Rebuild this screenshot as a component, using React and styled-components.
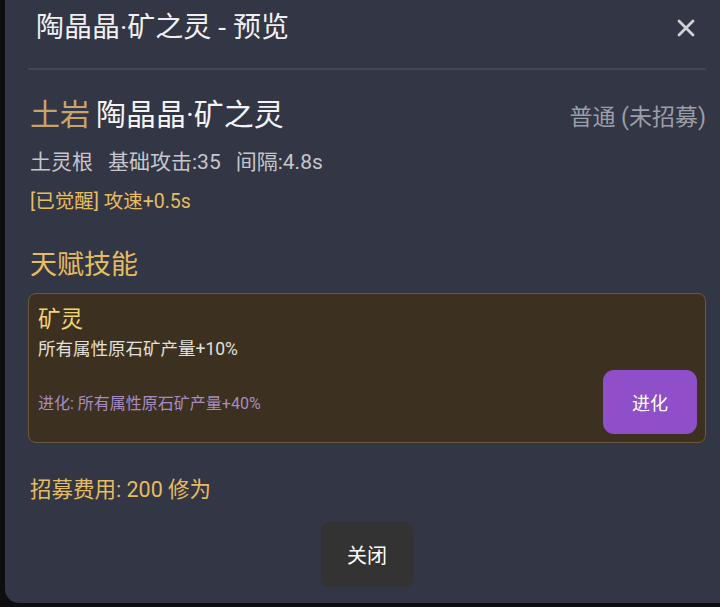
import React from 'react'
import styled, { createGlobalStyle } from 'styled-components'

const GlobalStyle = createGlobalStyle`
    html, body {
        margin: 0;
        padding: 0;
        background: #0e0e11;
        font-family: Roboto, "Noto Sans CJK SC", sans-serif;
    }
`

const Modal = styled.div`
    box-sizing: border-box;
    margin-left: 5px;
    width: 715px;
    height: 603px;
    padding: 0 14px 0 23px;
    background: #323645;
    border-radius: 0 0 0 14px;
    display: flex;
    flex-direction: column;
`

const Header = styled.div`
    display: flex;
    justify-content: space-between;
    align-items: center;
    height: 56px;
    padding: 0 10px 12px 8px;
    border-bottom: 2px solid #414555;
`

const Title = styled.h2`
    margin: 0;
    font-size: 28px;
    line-height: 36px;
    font-weight: 400;
    color: #f0f0f2;
`

const CloseIcon = styled.button`
    border: none;
    background: none;
    padding: 0;
    width: 20px;
    height: 20px;
    display: flex;
    cursor: pointer;
`

const NameRow = styled.div`
    display: flex;
    justify-content: space-between;
    align-items: center;
    margin-top: 25px;
    padding: 0 0 0 2px;
`

const Name = styled.div`
    font-size: 30px;
    line-height: 40px;
    color: #f4f4f6;
`

const Element = styled.span`
    color: #c9a46a;
    margin-right: 6px;
`

const Rarity = styled.div`
    font-size: 23px;
    color: #9c9ea7;
`

const Stats = styled.div`
    display: flex;
    gap: 15px;
    margin-top: 14px;
    padding-left: 2px;
    font-size: 21px;
    line-height: 26px;
    color: #c6c7cc;
`

const Awakened = styled.div`
    margin-top: 15px;
    padding-left: 2px;
    font-size: 19.5px;
    line-height: 24px;
    color: #e6bd5e;
`

const SectionTitle = styled.h3`
    margin: 35px 0 0;
    padding-left: 2px;
    font-size: 27px;
    line-height: 32px;
    font-weight: 400;
    color: #e6bd5e;
`

const SkillCard = styled.div`
    margin-top: 12px;
    height: 150px;
    box-sizing: border-box;
    padding: 11px 8px 8px 9px;
    background: #3c3020;
    border: 1px solid #6a583a;
    border-radius: 8px;
    display: flex;
    flex-direction: column;
`

const SkillName = styled.div`
    font-size: 22.5px;
    line-height: 28px;
    color: #f3d374;
`

const SkillDesc = styled.div`
    margin-top: 5px;
    font-size: 17.5px;
    line-height: 22px;
    color: #e2e0dc;
`

const EvolveRow = styled.div`
    margin-top: auto;
    display: flex;
    justify-content: space-between;
    align-items: center;
`

const EvolveText = styled.div`
    font-size: 16px;
    color: #a98bc2;
`

const Button = styled.button`
    border: none;
    font-family: inherit;
    font-size: ${p => p.$fs}px;
    color: #ffffff;
    width: ${p => p.$w}px;
    height: ${p => p.$h}px;
    border-radius: ${p => p.$r}px;
    background: ${p => p.$bg};
    cursor: pointer;
`

const Cost = styled.div`
    margin-top: 34px;
    padding-left: 2px;
    font-size: 21.5px;
    line-height: 26px;
    color: #e6bd5e;
`

const Footer = styled.div`
    display: flex;
    justify-content: center;
    margin-top: 19px;
`

export default function App() {
    return (
        <>
            <GlobalStyle />
            <Modal>
                <Header>
                    <Title>陶晶晶·矿之灵 - 预览</Title>
                    <CloseIcon aria-label="关闭">
                        <svg width="20" height="20" viewBox="0 0 20 20">
                            <path d="M3 3L17 17M17 3L3 17" stroke="#d2d3d8" strokeWidth="2.8" strokeLinecap="round" />
                        </svg>
                    </CloseIcon>
                </Header>
                <NameRow>
                    <Name><Element>土岩</Element>陶晶晶·矿之灵</Name>
                    <Rarity>普通 (未招募)</Rarity>
                </NameRow>
                <Stats>
                    <span>土灵根</span>
                    <span>基础攻击:35</span>
                    <span>间隔:4.8s</span>
                </Stats>
                <Awakened>[已觉醒] 攻速+0.5s</Awakened>
                <SectionTitle>天赋技能</SectionTitle>
                <SkillCard>
                    <SkillName>矿灵</SkillName>
                    <SkillDesc>所有属性原石矿产量+10%</SkillDesc>
                    <EvolveRow>
                        <EvolveText>进化: 所有属性原石矿产量+40%</EvolveText>
                        <Button $w={94} $h={64} $r={11} $fs={18} $bg="#8e4fc9">进化</Button>
                    </EvolveRow>
                </SkillCard>
                <Cost>招募费用: 200 修为</Cost>
                <Footer>
                    <Button $w={93} $h={65} $r={9} $fs={20} $bg="#333333">关闭</Button>
                </Footer>
            </Modal>
        </>
    )
}
